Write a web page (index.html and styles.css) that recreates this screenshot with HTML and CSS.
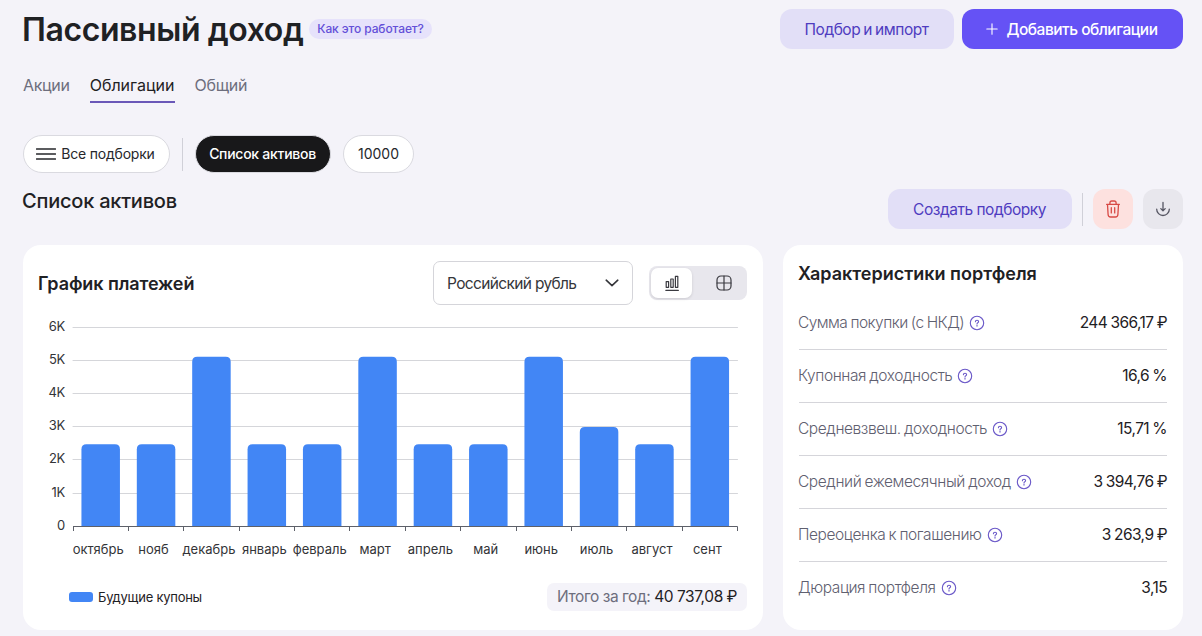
FILE: index.html
```
<!DOCTYPE html>
<html lang="ru">
<head>
    <meta charset="UTF-8">
    <meta name="viewport" content="width=device-width, initial-scale=1.0">
    <title>Пассивный доход</title>
    <link rel="stylesheet" href="styles.css">
</head>
<body>
    <div class="page">
        <header class="header">
            <h1>Пассивный доход</h1>
            <a class="how" href="#">Как это работает?</a>
            <div class="header-btns">
                <button class="btn btn-light btn-import">Подбор и импорт</button>
                <button class="btn btn-primary">
                    <svg width="12" height="12" viewBox="0 0 12 12"><path d="M6 .8v10.4M.8 6h10.4"/></svg>
                    <span>Добавить облигации</span>
                </button>
            </div>
        </header>
        <nav class="tabs">
            <a href="#">Акции</a>
            <a href="#" class="active">Облигации</a>
            <a href="#">Общий</a>
        </nav>
        <div class="filters">
            <button class="pill pill-all">
                <svg width="20" height="14" viewBox="0 0 20 14"><path d="M.5 2h19M.5 7h19M.5 12h19"/></svg>
                <span>Все подборки</span>
            </button>
            <i class="divider"></i>
            <button class="pill pill-dark">Список активов</button>
            <button class="pill pill-num">10000</button>
        </div>
        <div class="section-head">
            <h2>Список активов</h2>
            <div class="actions">
                <button class="btn btn-light btn-create">Создать подборку</button>
                <i class="divider"></i>
                <button class="btn icon-btn btn-delete">
                    <svg width="16" height="18" viewBox="0 0 16 18"><path d="M1.6 4.3h12.8M4.9 4V2.9Q4.9 1 6.8 1h2.4q1.9 0 1.9 1.9V4M2.5 4.5l.6 10Q3.2 17 5.6 17h4.8q2.4 0 2.5-2.5l.6-10M6.3 7.7v5.2M9.7 7.7v5.2"/></svg>
                </button>
                <button class="btn icon-btn btn-download">
                    <svg width="16" height="16" viewBox="0 0 16 16"><path d="M8 1.5v8M5.8 7.6L8 9.8l2.2-2.2M1.7 8.2a6.3 6.3 0 0 0 12.6 0"/></svg>
                </button>
            </div>
        </div>
        <main class="cards">
            <section class="card chart-card">
                <div class="chart-head">
                    <h3>График платежей</h3>
                    <div class="select">
                        <span>Российский рубль</span>
                        <svg width="14" height="8" viewBox="0 0 14 8"><path d="M1.2 1.2L7 6.6l5.8-5.4"/></svg>
                    </div>
                    <div class="switch">
                        <span class="active">
                            <svg width="14" height="16" viewBox="0 0 14 16"><path d="M.8 15.3h12.6M1.2 6.6h2.4v5.7H1.2zM5.8 4h2.4v8.3H5.8zM10.4 1.3h2.4v11h-2.4z"/></svg>
                        </span>
                        <span>
                            <svg width="16" height="16" viewBox="0 0 16 16"><rect x="1" y="1" width="14" height="14" rx="4"/><path d="M8 1v14M1 8h14"/></svg>
                        </span>
                    </div>
                </div>
                <svg class="chart" width="708" height="265"></svg>
                <div class="chart-foot">
                    <div class="legend"><i></i>Будущие купоны</div>
                    <div class="total"><span>Итого за год:</span> <b>40 737,08 ₽</b></div>
                </div>
            </section>
            <section class="card stats">
                <h3>Характеристики портфеля</h3>
                <ul>
                    <li><span>Сумма покупки (с НКД)</span><b>244 366,17 ₽</b></li>
                    <li><span>Купонная доходность</span><b>16,6 %</b></li>
                    <li><span>Средневзвеш. доходность</span><b>15,71 %</b></li>
                    <li><span>Средний ежемесячный доход</span><b>3 394,76 ₽</b></li>
                    <li><span>Переоценка к погашению</span><b>3 263,9 ₽</b></li>
                    <li><span>Дюрация портфеля</span><b>3,15</b></li>
                </ul>
            </section>
        </main>
    </div>
    <script>
        var months = ["октябрь","нояб","декабрь","январь","февраль","март","апрель","май","июнь","июль","август","сент"];
        var values = [2480,2480,5110,2480,2480,5110,2480,2480,5110,3000,2480,5110];
        var chart = document.querySelector(".chart");
        var left = 34, right = 698.5, bottom = 221.5;
        var rowHeight = 33.2;
        var step = (right - left) / months.length;
        var barWidth = 38.5;
        var html = "";

        function line(x1,y1,x2,y2,cls) {
            return `<line x1="${x1}" y1="${y1}" x2="${x2}" y2="${y2}" class="${cls}"/>`;
        }
        for(let i=0;i<=6;i++) {
            let y = Math.floor(bottom - 0.2 - rowHeight * i) + 0.5;
            if(i > 0) {
                html += line(left,y,right,y,"grid");
            }
            html += `<text x="26" y="${y+3.5}" class="y-label">${i ? i + "K" : 0}</text>`;
        }
        for(let i=0;i<months.length;i++) {
            let h = rowHeight * values[i] / 1000;
            let x = left + step * i + (step - barWidth) / 2;
            let y = bottom - h;
            html += `<path class="bar" d="M${x} ${bottom}V${y+5}q0 -5 5 -5h${barWidth-10}q5 0 5 5V${bottom}z"/>`;
            html += `<text x="${left + step * (i + 0.5) - 2.5}" y="249" class="x-label">${months[i]}</text>`;
        }
        html += line(left,bottom,right,bottom,"axis");
        for(let i=0;i<=months.length;i++) {
            let x = Math.floor(left + step * i) + 0.5;
            html += line(x,bottom,x,bottom+4.5,"axis");
        }
        chart.innerHTML = html;

        // hint icon after every label
        var labels = document.querySelectorAll(".stats li span");
        for(let i=0;i<labels.length;i++) {
            labels[i].insertAdjacentHTML("afterend",`<svg class="hint" width="16" height="16" viewBox="0 0 16 16"><circle cx="8" cy="8" r="6.7"/><path d="M6.4 6.7q0-1.5 1.6-1.5t1.6 1.3q0 .8-.8 1.2T8 8.9"/><path d="M8 10.2v.9"/></svg>`);
        }
    </script>
</body>
</html>
```
FILE: styles.css
```
* {
    margin: 0;
    padding: 0;
    box-sizing: border-box;
    text-decoration: none;
    list-style: none;
}
body {
    background: #f4f3f9;
    color: #1f2124;
    font-family: Inter, "Liberation Sans", sans-serif;
    font-size: 16px;
    overflow: hidden;
}
svg {
    display: block;
    flex: none;
    fill: none;
    stroke: currentColor;
    stroke-width: 1.3;
    stroke-linecap: round;
    stroke-linejoin: round;
}
button {
    border: 0;
    font: inherit;
    white-space: nowrap;
}
.page {
    width: 1160px;
    margin-left: 23px;
    padding-top: 9px;
}
.header {
    display: flex;
    height: 40px;
}
h1 {
    font-size: 32px;
    line-height: 42px;
    font-weight: 600;
    letter-spacing: -0.4px;
    text-indent: -1px;
    white-space: nowrap;
    width: 286px;
}
.how {
    height: 20px;
    margin-top: 10px;
    width: 123px;
    text-align: center;
    border-radius: 10px;
    background: #e6e2fb;
    color: #6450d8;
    font-size: 12px;
    line-height: 20px;
    font-weight: 500;
    letter-spacing: -0.1px;
    white-space: nowrap;
}
.header-btns {
    display: flex;
    gap: 8px;
    margin-left: auto;
}
.btn {
    display: flex;
    align-items: center;
    justify-content: center;
    height: 40px;
    border-radius: 12px;
    font-size: 15.5px;
}
.btn-light {
    padding-right: 1px;
    background: #e2dff7;
    color: #4f3cc0;
    letter-spacing: -0.47px;
}
.btn-import {
    width: 174px;
    word-spacing: -0.8px;
}
.btn-primary {
    width: 221px;
    gap: 9px;
    padding-right: 2px;
    background: #6552f5;
    color: #fff;
    font-weight: 500;
    letter-spacing: -0.5px;
}
.btn-primary svg {
    stroke-width: 1.1;
}
.tabs {
    display: flex;
    gap: 20px;
    margin-top: 22px;
    height: 32px;
}
.tabs a {
    color: #6d6e7d;
    line-height: 29px;
    letter-spacing: -0.3px;
}
.tabs .active {
    color: #1f2124;
    border-bottom: 2px solid #6a58b8;
    letter-spacing: 0;
}
.filters {
    display: flex;
    align-items: center;
    margin-top: 32px;
    height: 38px;
}
.divider {
    width: 1px;
    height: 33px;
    background: #d0d0d8;
}
.pill {
    display: flex;
    align-items: center;
    justify-content: center;
    height: 38px;
    padding-bottom: 1px;
    border: 1px solid #dadae0;
    border-radius: 19px;
    background: #fff;
    color: #26272b;
    font-size: 14px;
}
.pill-all {
    width: 147px;
    gap: 5px;
    margin-right: 12px;
    padding-right: 2px;
    letter-spacing: -0.2px;
}
.pill-dark {
    width: 136px;
    margin: 0 12px;
    padding-right: 1px;
    background: #18181a;
    color: #fff;
    font-weight: 500;
    letter-spacing: -0.27px;
}
.pill-num {
    width: 71px;
}
.section-head {
    display: flex;
    justify-content: space-between;
    margin-top: 16px;
    height: 40px;
}
h2 {
    font-size: 20px;
    line-height: 24px;
    font-weight: 500;
    letter-spacing: -0.22px;
    text-indent: -1px;
}
.actions {
    display: flex;
    align-items: center;
}
.btn-create {
    width: 184px;
    margin-right: 10px;
}
.icon-btn {
    width: 40px;
    margin-left: 10px;
}
.btn-delete {
    background: #fde1df;
    color: #d84a45;
}
.btn-download {
    background: #e8e7ed;
    color: #555562;
}
.cards {
    display: flex;
    gap: 20px;
    margin-top: 16px;
}
.card {
    height: 385px;
    padding: 16px;
    border-radius: 18px;
    background: #fff;
}
.chart-card {
    width: 740px;
}
.chart-head {
    display: flex;
    align-items: center;
    height: 44px;
}
h3 {
    font-size: 18px;
    line-height: 26px;
    font-weight: 600;
    text-indent: -1px;
    white-space: nowrap;
}
.chart-head h3 {
    padding-top: 2px;
    letter-spacing: -0.1px;
}
.select {
    display: flex;
    align-items: center;
    justify-content: space-between;
    width: 200px;
    height: 44px;
    margin-left: auto;
    padding: 0 13px;
    border: 1px solid #d5d5da;
    border-radius: 7px;
    color: #35363a;
    font-size: 15.5px;
    letter-spacing: -0.65px;
}
.select svg {
    stroke-width: 1.6;
}
.switch {
    display: flex;
    width: 98px;
    height: 34px;
    margin-left: 16px;
    padding: 2px;
    border-radius: 8px;
    background: #e8e7ed;
}
.switch span {
    display: flex;
    align-items: center;
    justify-content: center;
    flex: 1;
    color: #3a3a40;
}
.switch .active {
    flex: 0 0 41px;
    border-radius: 7px;
    background: #fff;
    box-shadow: 0 1px 3px rgba(0,0,0,0.12);
}
.switch span:last-child {
    padding-left: 10px;
}
.switch svg {
    stroke-width: 1.2;
}
.chart {
    stroke: none;
}
.chart .grid {
    stroke: #d5d6da;
    stroke-width: 1;
}
.chart .axis {
    stroke: #5d6069;
    stroke-width: 1;
    stroke-linecap: butt;
}
.chart .bar {
    fill: #4286f5;
}
.chart text {
    fill: #333437;
    font-size: 13px;
}
.chart .y-label {
    text-anchor: end;
    letter-spacing: -0.3px;
}
.x-label {
    text-anchor: middle;
}
.chart-foot {
    display: flex;
    align-items: center;
    justify-content: space-between;
    margin-top: 13px;
    height: 28px;
}
.legend {
    display: flex;
    align-items: center;
    gap: 5px;
    margin-left: 30px;
    font-size: 13px;
    letter-spacing: -0.25px;
}
.legend i {
    width: 24px;
    height: 10px;
    border-radius: 3px;
    background: #4286f5;
}
.total {
    width: 200px;
    height: 28px;
    border-radius: 7px;
    background: #f4f3f9;
    font-size: 15.5px;
    line-height: 28px;
    letter-spacing: -0.4px;
    word-spacing: -0.2px;
    text-align: center;
    white-space: nowrap;
}
.total span {
    color: #6d6e7d;
}
.total b,
.stats b {
    font-weight: 400;
    color: #1f2124;
}
.stats {
    width: 400px;
}
.stats ul {
    margin-top: 10px;
}
.stats li {
    display: flex;
    align-items: center;
    height: 53px;
    border-bottom: 1px solid #d5d5da;
    font-size: 15.5px;
    letter-spacing: -0.58px;
    word-spacing: -0.5px;
    white-space: nowrap;
}
.stats li:last-child {
    border-bottom-color: transparent;
}
.stats span {
    margin-left: -1px;
    padding-bottom: 1px;
    color: #5f6070;
    font-weight: 300;
    letter-spacing: -0.42px;
    word-spacing: -0.7px;
}
.stats li:first-child span {
    letter-spacing: -0.55px;
}
.stats b {
    margin-left: auto;
    padding-bottom: 1px;
}
.hint {
    margin-left: 5px;
    color: #6a58c8;
    stroke-width: 1.1;
}
```
